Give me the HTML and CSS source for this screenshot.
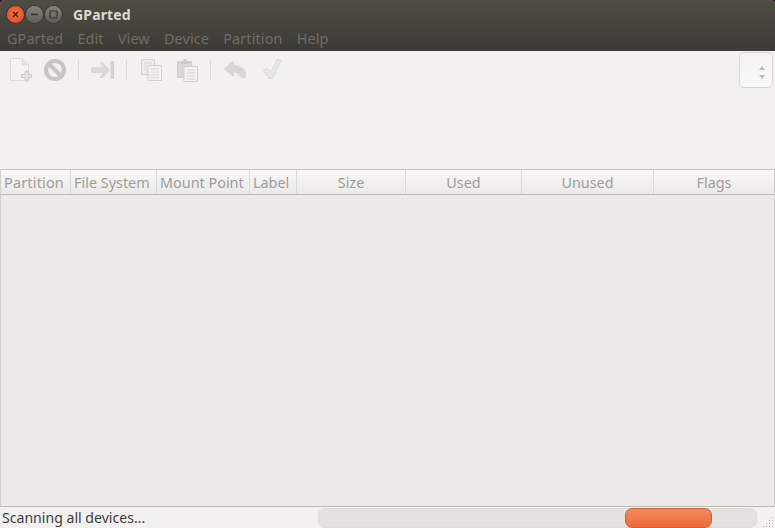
FILE: index.html
```html
<!DOCTYPE html>
<html lang="en">
<head>
<meta charset="utf-8">
<title>GParted</title>
<link rel="stylesheet" href="styles.css">
</head>
<body>
<div class="window">
  <div class="titlebar">
    <span class="wbtn close"><svg width="9" height="9" viewBox="0 0 9 9"><path d="M2 2l5 5M7 2l-5 5" stroke="#4a1a08" stroke-width="1.4"/></svg></span>
    <span class="wbtn"><svg width="9" height="9" viewBox="0 0 9 9"><path d="M1 4.500h7" stroke="#36352f" stroke-width="1.500"/></svg></span>
    <span class="wbtn"><svg width="9" height="9" viewBox="0 0 9 9"><rect x="1" y="1" width="7" height="7" rx=".5" fill="none" stroke="#36352f" stroke-width="1.200"/></svg></span>
    <span class="title">GParted</span>
  </div>
  <div class="menubar">
    <span>GParted</span><span>Edit</span><span>View</span><span>Device</span><span>Partition</span><span>Help</span>
  </div>
  <div class="toolarea">
    <div class="toolbar">
      <svg class="tool t-new" width="24" height="26" viewBox="0 0 24 26"><path d="M1.500 1.500h12l6 6v16h-18z" fill="#f3f2f0" stroke="#dcdbd8"/><path d="M13.500 1.500v6h6" fill="#e6e5e2" stroke="#dcdbd8"/><path d="M16 14.500h3v3h3.500v3h-3.500v3.500h-3v-3.500h-3.500v-3h3.500z" fill="#e4e4e0" stroke="#c9cac5"/></svg>
      <svg class="tool t-del" width="24" height="24" viewBox="0 0 24 24"><circle cx="12" cy="12" r="9" fill="none" stroke="#c9c5c3" stroke-width="4.200"/><path d="M5.500 5.500l13 13" stroke="#c9c5c3" stroke-width="4.200"/></svg>
      <i class="sep s1"></i>
      <svg class="tool t-apply" width="24" height="20" viewBox="0 0 24 20"><path d="M2.500 7h9l-3-5h3.500l7 8-7 8h-3.500l3-5h-9a3 3 0 0 1 0-6z" fill="#dad9d6"/><rect x="19.500" y="1" width="3.500" height="18" rx="1" fill="#d3d2cf"/></svg>
      <i class="sep s2"></i>
      <svg class="tool t-copy" width="21" height="22" viewBox="0 0 21 22"><path d="M.5.500h13v15h-13z" fill="#eeedeb" stroke="#d3d2cf"/><path d="M7 6.500h13.500v15h-13.500z" fill="#f3f2f0" stroke="#d0cfcc"/><path d="M3 4h8M3 7h3M3 10h3M9.500 10h8.500M9.500 13h8.500M9.500 16h8.500M9.500 19h8.500" stroke="#d6d5d2"/></svg>
      <svg class="tool t-paste" width="21" height="24" viewBox="0 0 21 24"><path d="M.5 3.500h14v16h-14z" fill="#d9d8d5" stroke="#cfcecb"/><path d="M4 3.500h2.500v-2.500h3v2.500h2.500v2.500h-8z" fill="#cbcac7"/><path d="M7 8.500h13.500v15h-13.500z" fill="#f3f2f0" stroke="#d0cfcc"/><path d="M9.500 12h8.500M9.500 15h8.500M9.500 18h8.500M9.500 21h8.500" stroke="#d6d5d2"/></svg>
      <i class="sep s3"></i>
      <svg class="tool t-undo" width="24" height="20" viewBox="0 0 24 20"><path d="M10 1.500l-8.500 7 8.500 7v-4c4 0 6 1.500 7.500 4.500 1 2 5 2 5-1 0-5-5-9-12.500-9.500z" fill="#d8d6d3" stroke="#d8d6d3" stroke-linejoin="round" stroke-width="1.500"/></svg>
      <svg class="tool t-check" width="20" height="24" viewBox="0 0 20 24"><path d="M1.500 12.500l4-2 3 4 7-13.500 3.500 1.500-8.500 18h-3.500z" fill="#e6e6e2" stroke="#d9dad5"/></svg>
    </div>
    <div class="spin"><i class="up"></i><i class="down"></i></div>
  </div>
  <div class="thead">
    <div class="th left c1"><span class="wide">Partition</span></div>
    <div class="th left c2">File System</div>
    <div class="th left c3">Mount Point</div>
    <div class="th left c4">Label</div>
    <div class="th c5">Size</div>
    <div class="th c6">Used</div>
    <div class="th c7">Unused</div>
    <div class="th c8">Flags</div>
  </div>
  <div class="list"></div>
  <div class="status">
    <span class="stext">Scanning all devices...</span>
    <div class="progress"><div class="pulse"></div></div>
    <svg class="grip" width="12" height="12" viewBox="0 0 12 12"><path d="M9 1h1v1h-1zM6 4h1v1h-1zM9 4h1v1h-1zM3 7h1v1h-1zM6 7h1v1h-1zM9 7h1v1h-1zM0 10h1v1h-1zM3 10h1v1h-1zM6 10h1v1h-1zM9 10h1v1h-1z" fill="#bdbcb8"/></svg>
  </div>
</div>
</body>
</html>
```
FILE: styles.css
```css
* { box-sizing: border-box; }
html, body { margin: 0; height: 100%; overflow: hidden; background: #2c0a24; }
body { font-family: "Noto Sans", "Open Sans", sans-serif; }
.window { width: 775px; height: 528px; display: flex; flex-direction: column; background: #f2f1ef; border-radius: 5px 5px 0 0; overflow: hidden; }

.titlebar { height: 27px; display: flex; align-items: center; padding: 2px 0 0 7px; background: linear-gradient(#4f4c44, #45433c); flex: none; }
.wbtn { width: 17px; height: 17px; margin-right: 2px; border-radius: 50%; display: flex; align-items: center; justify-content: center; background: linear-gradient(#85837c, #5f5d57); box-shadow: 0 0 0 1px #3b3a34; }
.wbtn.close { background: radial-gradient(circle at 50% 45%, #f5764a, #d9461d); }
.title { margin-left: 9px; font-size: 14px; letter-spacing: .15px; font-weight: 700; color: #dfdbd2; }

.menubar { height: 24px; display: flex; gap: 14.200px; padding: 0 0 2px 7px; align-items: center; background: linear-gradient(#44423b, #3c3b36); font-size: 14.400px; letter-spacing: .12px; color: #716e65; flex: none; }

.toolarea { height: 118px; display: flex; justify-content: space-between; align-items: flex-start; flex: none; background: #f2f1ef; }
.toolbar { display: flex; align-items: center; height: 38px; padding-left: 9px; }
.tool { flex: none; display: block; filter: blur(.35px); }
.t-del { margin-left: 10px; }
.sep { width: 1px; height: 20px; background: #dcdbd8; flex: none; }
.s1 { margin: 0 12px 0 11px; }
.s2 { margin: 0 14px 0 11px; }
.t-paste { margin-left: 15px; }
.s3 { margin: 0 12px 0 12px; }
.t-check { margin-left: 15px; }
.spin { position: relative; width: 34px; height: 36px; margin: 1px 2px 0 0; border: 1px solid #d6d5d2; border-radius: 5px; background: linear-gradient(#f3f2f0, #f9f9f8); }
.up, .down { position: absolute; left: 19px; width: 0; height: 0; border-left: 3.500px solid transparent; border-right: 3.500px solid transparent; }
.up { top: 13px; border-bottom: 4px solid #bdbcb8; }
.down { top: 22px; border-top: 4px solid #bdbcb8; }

.thead { height: 26px; display: flex; flex: none; border-top: 1px solid #c5c4c0; border-bottom: 1px solid #bab9b4; border-left: 1px solid #cfcecb; border-right: 1px solid #cfcecb; background: linear-gradient(#f9f8f7, #ebeae8); font-size: 14.400px; color: #9d9d9d; }
.th { display: flex; align-items: center; justify-content: center; border-right: 1px solid #dbdad7; white-space: nowrap; }
.th:last-child { border-right: 0; }
.th.left { justify-content: flex-start; padding-left: 3px; }
.wide { letter-spacing: .2px; }
.c1 { width: 70px; }
.c2 { width: 86px; }
.c3 { width: 93px; }
.c4 { width: 47px; }
.c5 { width: 109px; }
.c6 { width: 116px; }
.c7 { width: 132px; }
.c8 { flex: 1; }

.list { flex: 1; background: #ebeae8; border-left: 1px solid #cfcecb; border-right: 1px solid #cfcecb; border-bottom: 1px solid #bcbbb6; }

.status { height: 21px; display: flex; align-items: center; flex: none; position: relative; background: #f2f1ef; }
.stext { width: 318px; padding-left: 2px; font-size: 14.100px; color: #3d3d3d; }
.progress { width: 439px; height: 20px; margin-top: 1px; border: 1px solid #dddcd9; border-radius: 7px; background: #e3e2df; display: flex; padding-left: 306px; }
.pulse { width: 87px; height: 20px; margin-top: -1px; border-radius: 7px; border: 1px solid #c9633a; background: linear-gradient(#f58a5b, #ea6b3b); }
.grip { position: absolute; right: 0; bottom: 0; }
```
